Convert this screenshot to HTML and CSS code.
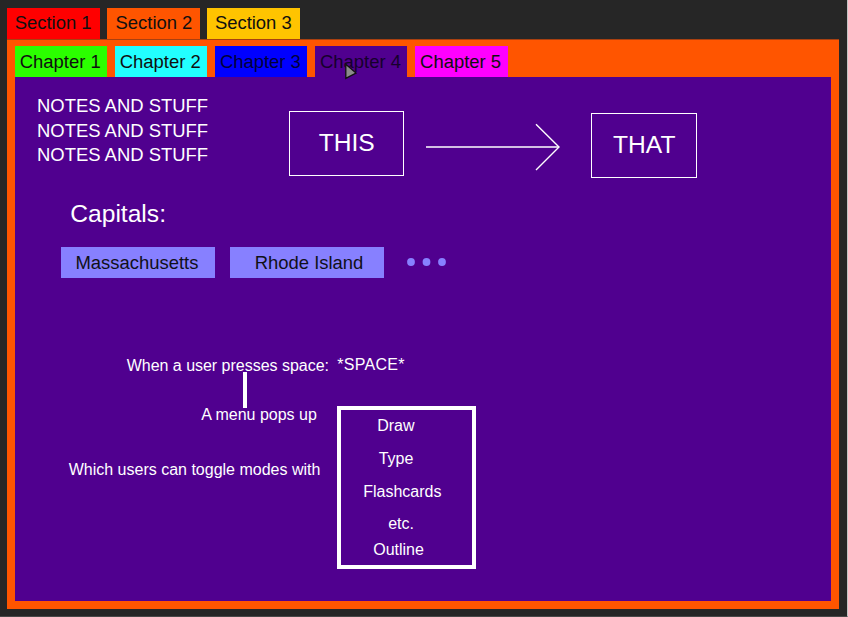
FILE: index.html
```html
<!DOCTYPE html>
<html lang="en">
<head>
<meta charset="utf-8">
<title>Notebook</title>
<link rel="stylesheet" href="styles.css">
</head>
<body>
<div class="app">
  <nav class="tabs sections">
    <div class="tab red">Section 1</div>
    <div class="tab orange">Section 2</div>
    <div class="tab yellow">Section 3</div>
  </nav>
  <div class="section">
    <nav class="tabs chapters">
      <div class="tab green">Chapter 1</div>
      <div class="tab cyan">Chapter 2</div>
      <div class="tab blue">Chapter 3</div>
      <div class="tab purple">Chapter 4
        <svg class="cursor" width="14" height="18" viewBox="0 0 14 18"><path d="M1.8 1.2V15.4L12 10Z" fill="#8c8c8c" stroke="#111" stroke-width="1.3"/></svg>
      </div>
      <div class="tab magenta">Chapter 5</div>
    </nav>
    <main class="page">
      <div class="top">
        <div class="notes">NOTES AND STUFF<br>NOTES AND STUFF<br>NOTES AND STUFF</div>
        <div class="box this">THIS</div>
        <svg class="arrow" width="134" height="48" viewBox="0 0 134 48" fill="none" stroke="#fff" stroke-width="1.4"><path d="M0 24H133"/><path d="M110 1.2L133 24L110 47"/></svg>
        <div class="box that">THAT</div>
      </div>
      <h1>Capitals:</h1>
      <div class="cards">
        <div class="card">Massachusetts</div>
        <div class="card second">Rhode Island</div>
        <svg class="dots" width="40" height="8" viewBox="0 0 40 8" fill="#8780ff"><circle cx="4" cy="4" r="3.9"/><circle cx="19.5" cy="4" r="3.9"/><circle cx="35" cy="4" r="3.9"/></svg>
      </div>
      <div class="modes">
        <div class="steps">
          <p class="when">When a user presses space:<span class="connector"></span></p>
          <p class="pops">A menu pops up</p>
          <p class="toggle">Which users can toggle modes with</p>
        </div>
        <div class="result">
          <p class="key">*SPACE*</p>
          <ul class="menu">
            <li class="draw">Draw</li>
            <li class="type">Type</li>
            <li class="flash">Flashcards</li>
            <li class="etc">etc.</li>
            <li class="outline">Outline</li>
          </ul>
        </div>
      </div>
    </main>
  </div>
</div>
</body>
</html>
```

FILE: styles.css
```css
* { box-sizing: border-box; margin: 0; padding: 0; }
body {
  width: 848px;
  height: 617px;
  overflow: hidden;
  background: #262626;
  font: 18.46px/24.6px "Liberation Sans", Arial, sans-serif;
  color: #fff;
}
.app {
  height: 617px;
  padding: 8px 8px 7px 7px;
  border-right: 1px solid #c4c4c4;
  border-bottom: 1px solid #484848;
}
.tabs { display: flex; gap: 7.7px; }
.tab {
  position: relative;
  width: 92.5px;
  height: 31px;
  line-height: 31px;
  color: #101010;
  white-space: nowrap;
}
.tabs { gap: 7.6px; }
.sections .tab { padding-left: 7.7px; line-height: 30px; }
.sections { height: 30.5px; }
.chapters .tab { padding-left: 5px; }
.red { background: #f00; }
.sections .orange { background: #ff5500; padding-left: 8.4px; line-height: 29px; }
.yellow { background: #ffc400; }
.green { background: #2bff00; }
.cyan { background: #22ffff; }
.blue { background: #00f; color: #00003a; }
.purple { background: #50008f; color: #16002c; }
.magenta { background: #f0f; }
.cursor { position: absolute; left: 29.5px; top: 16.5px; z-index: 1; }
.section {
  height: 570.5px;
  padding: 6.5px 7.7px;
  background: #ff5500;
  border-top: 1px solid #a84010;
}
.page {
  height: 524px;
  background: #50008f;
}
.top { display: flex; align-items: flex-start; padding: 17px 0 0 22.3px; }
.notes { width: 252px; white-space: nowrap; }
.box {
  border: 1.4px solid #fff;
  height: 65px;
  line-height: 62px;
  font-size: 24.6px;
  text-align: center;
}
.this { width: 115.5px; margin-top: 16.5px; }
.arrow { margin: 29px 0 0 21.7px; }
.that { width: 106.5px; margin: 19px 0 0 30.8px; }
h1 { margin: 21px 0 0 55.6px; font-size: 24.6px; line-height: 30px; font-weight: 400; }
.cards { display: flex; margin: 18px 0 0 46.3px; }
.card {
  width: 153.8px;
  height: 30.5px;
  line-height: 31px;
  padding-left: 14.5px;
  margin-right: 15.4px;
  background: #8780ff;
  color: #101018;
}
.second { padding-left: 24.5px; margin-right: 23.4px; }
.dots { margin-top: 11px; }
.modes { display: flex; margin-top: 78px; font-size: 16px; line-height: 18px; white-space: nowrap; }
.steps { width: 322.5px; padding-top: 1px; }
.when { position: relative; margin-left: 112px; letter-spacing: -0.02px; }
.connector {
  position: absolute;
  left: 116px;
  top: 15px;
  width: 4px;
  height: 36px;
  background: #fff;
}
.pops { margin: 31px 0 0 186.5px; }
.toggle { margin: 37px 0 0 54px; }
.key { letter-spacing: 0.3px; }
.menu {
  list-style: none;
  width: 139px;
  height: 163px;
  margin-top: 32px;
  padding-top: 7px;
  border: 4px solid #fff;
}
.draw { padding-left: 36px; }
.type { padding: 15px 0 0 37.5px; }
.flash { padding: 15px 0 0 22px; }
.etc { padding: 14px 0 0 47px; }
.outline { padding: 8px 0 0 32px; }
```
